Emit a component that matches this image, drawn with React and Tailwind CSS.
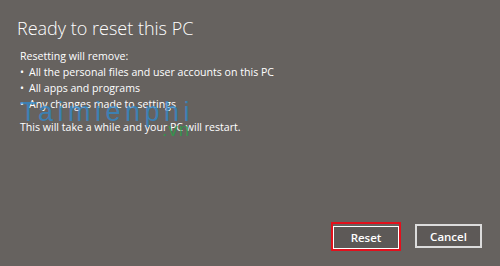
export default function App() {
  const font = { fontFamily: '"Open Sans", "Noto Sans", "DejaVu Sans", sans-serif' };
  return (
    <div className="relative w-[500px] h-[266px] bg-[#66625f] text-white overflow-hidden" style={font}>
      <div className="flex flex-col h-full pl-[17px] pr-[17px] pt-[11px] pb-[15px]">
        <h1 className="text-[18px] leading-[34px] font-light">Ready to reset this PC</h1>
        <div className="mt-[3px] pl-[3px] text-[10.6px] leading-[16px]">
          <p>Resetting will remove:</p>
          <ul>
            <li className="flex"><span className="w-[9px]">•</span>All the personal files and user accounts on this PC</li>
            <li className="flex"><span className="w-[9px]">•</span>All apps and programs</li>
            <li className="flex"><span className="w-[9px]">•</span>Any changes made to settings</li>
          </ul>
          <p className="mt-[7px]">This will take a while and your PC will restart.</p>
        </div>
        <div className="mt-auto flex justify-end items-center gap-[14px] pr-[1px]">
          <div className="border-2 border-[#e3101c]">
            <button className="w-[66px] h-[23px] border border-white bg-[#5d5957] text-[11.5px] font-semibold">Reset</button>
          </div>
          <button className="w-[67px] h-[24px] border-2 border-[#dcdcdc] bg-[#5d5957] text-[11.5px] font-semibold">Cancel</button>
        </div>
      </div>
      <div className="absolute left-[20px] top-[97px] text-[27px] leading-[30px] tracking-[4.5px] text-[#2f8ad0]/75 pointer-events-none" style={{ fontFamily: '"Liberation Sans", sans-serif' }}>Taimienphi</div>
      <div className="absolute left-[162px] top-[119px] text-[19px] leading-[22px] tracking-[1px] text-[#2e9a4a]/85 pointer-events-none" style={{ fontFamily: '"Liberation Sans", sans-serif' }}>.vn</div>
    </div>
  );
}
